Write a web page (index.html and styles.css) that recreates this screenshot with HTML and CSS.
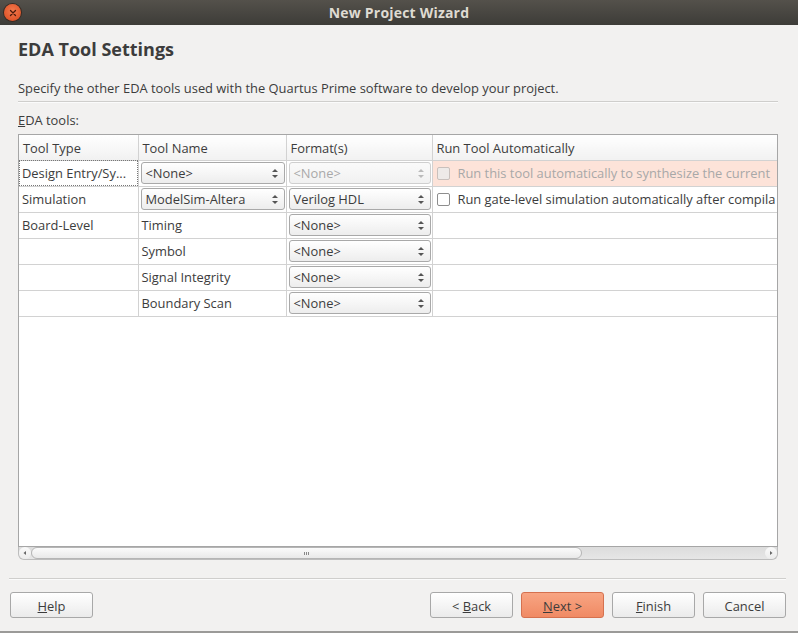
FILE: index.html
```html
<!DOCTYPE html>
<html>
<head>
<meta charset="utf-8">
<link rel="stylesheet" href="styles.css">
</head>
<body>
<div class="window">
  <div class="titlebar">
    <span class="close"><svg width="16" height="16" viewBox="0 0 16 16"><path d="M5.5 5.5l5 5M10.5 5.5l-5 5" stroke="#4a1a0c" stroke-width="1.3" stroke-linecap="round"/></svg></span>
    <span class="title">New Project Wizard</span>
  </div>
  <div class="content">
    <h1 class="heading">EDA Tool Settings</h1>
    <p class="desc">Specify the other EDA tools used with the Quartus Prime software to develop your project.</p>
    <div class="sep"></div>
    <div class="label"><u>E</u>DA tools:</div>
    <div class="tablebox">
      <table class="grid">
        <colgroup><col class="c1"><col class="c2"><col class="c3"><col class="c4"></colgroup>
        <thead>
          <tr><th>Tool Type</th><th>Tool Name</th><th>Format(s)</th><th>Run Tool Automatically</th></tr>
        </thead>
        <tbody>
          <tr>
            <td class="focus">Design Entry/Sy...</td>
            <td class="cb-cell"><div class="combo"><span>&lt;None&gt;</span><i class="arr"></i></div></td>
            <td class="cb-cell"><div class="combo disabled"><span>&lt;None&gt;</span><i class="arr"></i></div></td>
            <td class="run pink"><span class="chk dis"></span><span class="nowrap">Run this tool automatically to synthesize the current</span></td>
          </tr>
          <tr>
            <td>Simulation</td>
            <td class="cb-cell"><div class="combo"><span>ModelSim-Altera</span><i class="arr"></i></div></td>
            <td class="cb-cell"><div class="combo"><span>Verilog HDL</span><i class="arr"></i></div></td>
            <td class="run"><span class="chk"></span><span class="nowrap">Run gate-level simulation automatically after compila</span></td>
          </tr>
          <tr>
            <td>Board-Level</td>
            <td>Timing</td>
            <td class="cb-cell"><div class="combo"><span>&lt;None&gt;</span><i class="arr"></i></div></td>
            <td></td>
          </tr>
          <tr>
            <td></td>
            <td>Symbol</td>
            <td class="cb-cell"><div class="combo"><span>&lt;None&gt;</span><i class="arr"></i></div></td>
            <td></td>
          </tr>
          <tr>
            <td></td>
            <td>Signal Integrity</td>
            <td class="cb-cell"><div class="combo"><span>&lt;None&gt;</span><i class="arr"></i></div></td>
            <td></td>
          </tr>
          <tr>
            <td></td>
            <td>Boundary Scan</td>
            <td class="cb-cell"><div class="combo"><span>&lt;None&gt;</span><i class="arr"></i></div></td>
            <td></td>
          </tr>
        </tbody>
      </table>
    </div>
    <div class="hscroll">
      <div class="sbtn left"><svg width="6" height="6" viewBox="0 0 6 6"><path d="M4 1L1.5 3L4 5Z" fill="#666"/></svg></div>
      <div class="thumb"><span class="grip"></span></div>
      <div class="sbtn right"><svg width="6" height="6" viewBox="0 0 6 6"><path d="M2 1L4.5 3L2 5Z" fill="#666"/></svg></div>
    </div>
  </div>
  <div class="sep bottomsep"></div>
  <div class="buttons">
    <button class="btn"><u>H</u>elp</button>
    <div class="spacer"></div>
    <button class="btn">&lt; <u>B</u>ack</button>
    <button class="btn primary"><u>N</u>ext &gt;</button>
    <button class="btn"><u>F</u>inish</button>
    <button class="btn">Cancel</button>
  </div>
</div>
</body>
</html>
```
FILE: styles.css
```css
* { box-sizing: border-box; }
html, body { margin: 0; padding: 0; }
body {
  width: 798px;
  height: 633px;
  overflow: hidden;
  background: #f2f1f0;
  font-family: "Open Sans", "Noto Sans", sans-serif;
  font-size: 12.9px;
  color: #3c3c3c;
}
.window {
  height: 633px;
  display: flex;
  flex-direction: column;
  border-bottom: 2px solid #9b9a98;
}
.titlebar {
  height: 25px;
  background: linear-gradient(#54514b, #3d3c38);
  display: flex;
  align-items: center;
  justify-content: center;
  position: relative;
}
.close {
  position: absolute;
  left: 4px;
  top: 4px;
  width: 17px;
  height: 17px;
  border-radius: 50%;
  background: radial-gradient(circle at 50% 40%, #f27a4e, #d9471c);
  box-shadow: 0 0 0 1px #3a2a22;
  display: flex;
  align-items: center;
  justify-content: center;
}
.close svg { width: 16px; height: 16px; }
.title {
  color: #dfdbd2;
  font-weight: bold;
  font-size: 14px;
  letter-spacing: 0.2px;
}
.content {
  padding: 0 20px 0 18px;
}
.heading {
  margin: 12px 0 0 0;
  font-size: 18px;
  font-weight: bold;
  color: #3c3c3c;
  line-height: 24px;
}
.desc {
  margin: 18px 0 0 0;
  line-height: 18px;
}
.sep {
  background: #cfcecc;
  border-bottom: 1px solid #fbfbfb;
  height: 2px;
}
.content .sep { margin-top: 4px; }
.label {
  margin-top: 9px;
  line-height: 16px;
}
.tablebox {
  margin-top: 6px;
  height: 413px;
  border: 1px solid #a6a6a6;
  background: #fff;
  overflow: hidden;
}
.grid {
  border-collapse: collapse;
  table-layout: fixed;
  width: 820px;
}
.c1 { width: 119px; }
.c2 { width: 148px; }
.c3 { width: 146px; }
.c4 { width: 407px; }
.grid th {
  height: 25px;
  text-align: left;
  font-weight: normal;
  padding: 2px 4px 0 4px;
  background: linear-gradient(#ffffff, #f1f1f1);
  border-right: 1px solid #d2d2d2;
  border-bottom: 1px solid #d2d2d2;
  white-space: nowrap;
}
.grid td {
  height: 26px;
  padding: 0 2px 0 3px;
  border-right: 1px solid #d2d2d2;
  border-bottom: 1px solid #d2d2d2;
  white-space: nowrap;
  overflow: hidden;
}
.grid td.focus { outline: 1px dotted #777; outline-offset: -1px; }
.grid td.cb-cell { padding: 0 1px 0 2px; }
.combo {
  height: 22px;
  border: 1px solid #a9a9a9;
  border-radius: 3px;
  background: linear-gradient(#ffffff, #ededed);
  display: flex;
  align-items: center;
  padding: 0 5px 0 4px;
  position: relative;
  color: #3c3c3c;
}
.combo span { flex: 1; }
.combo.disabled { color: #a9a9a9; border-color: #cfcfcf; background: linear-gradient(#fafafa, #f1f1f1); }
.arr {
  width: 6px;
  height: 11px;
  position: relative;
  margin-right: 1px;
}
.arr::before, .arr::after {
  content: "";
  position: absolute;
  left: 0;
  border-left: 3px solid transparent;
  border-right: 3px solid transparent;
}
.arr::before { top: 1px; border-bottom: 3px solid #555; }
.arr::after { bottom: 1px; border-top: 3px solid #555; }
.combo.disabled .arr::before { border-bottom-color: #bbb; }
.combo.disabled .arr::after { border-top-color: #bbb; }
.run { padding-left: 4px !important; }
.run.pink { background: #fde3d9; color: #a8a8a8; }
.chk {
  display: inline-block;
  width: 13px;
  height: 13px;
  border: 1px solid #8e8e8e;
  border-radius: 2px;
  background: #fff;
  vertical-align: -2px;
  margin-right: 8px;
}
.chk.dis { border-color: #c9c0bc; background: #eeeae8; }
.hscroll {
  height: 13px;
  display: flex;
  background: linear-gradient(#dcdcdc, #e6e6e6);
  border: 1px solid #bdbdbd;
  border-top: none;
  border-radius: 0 0 6px 6px;
  position: relative;
}
.sbtn {
  width: 12px;
  display: flex;
  align-items: center;
  justify-content: center;
  background: linear-gradient(#fafafa, #ececec);
  border-radius: 6px;
}
.thumb {
  width: 551px;
  background: linear-gradient(#fbfbfb, #e9e9e9);
  border: 1px solid #b5b5b5;
  border-radius: 6px;
  display: flex;
  align-items: center;
  justify-content: center;
}
.grip {
  width: 5px;
  height: 3px;
  border-left: 1px solid #888;
  border-right: 1px solid #888;
  position: relative;
}
.grip::after {
  content: "";
  position: absolute;
  left: 1px;
  top: 0;
  width: 1px;
  height: 3px;
  background: #888;
}
.hscroll .right { margin-left: auto; }
.bottomsep {
  margin: 18px 12px 0 9px;
}
.buttons {
  display: flex;
  padding: 12px 12px 0 10px;
  gap: 8px;
}
.spacer { flex: 1; }
.btn {
  width: 83px;
  height: 26px;
  border: 1px solid #a8a8a8;
  border-radius: 3px;
  background: linear-gradient(#ffffff, #ebebeb);
  font-family: inherit;
  font-size: 12.9px;
  color: #3c3c3c;
  padding: 2px 0 0 0;
}
.btn.primary {
  background: linear-gradient(#f8a583, #f08a64);
  border-color: #d5714f;
}
.nowrap { white-space: nowrap; }
```
